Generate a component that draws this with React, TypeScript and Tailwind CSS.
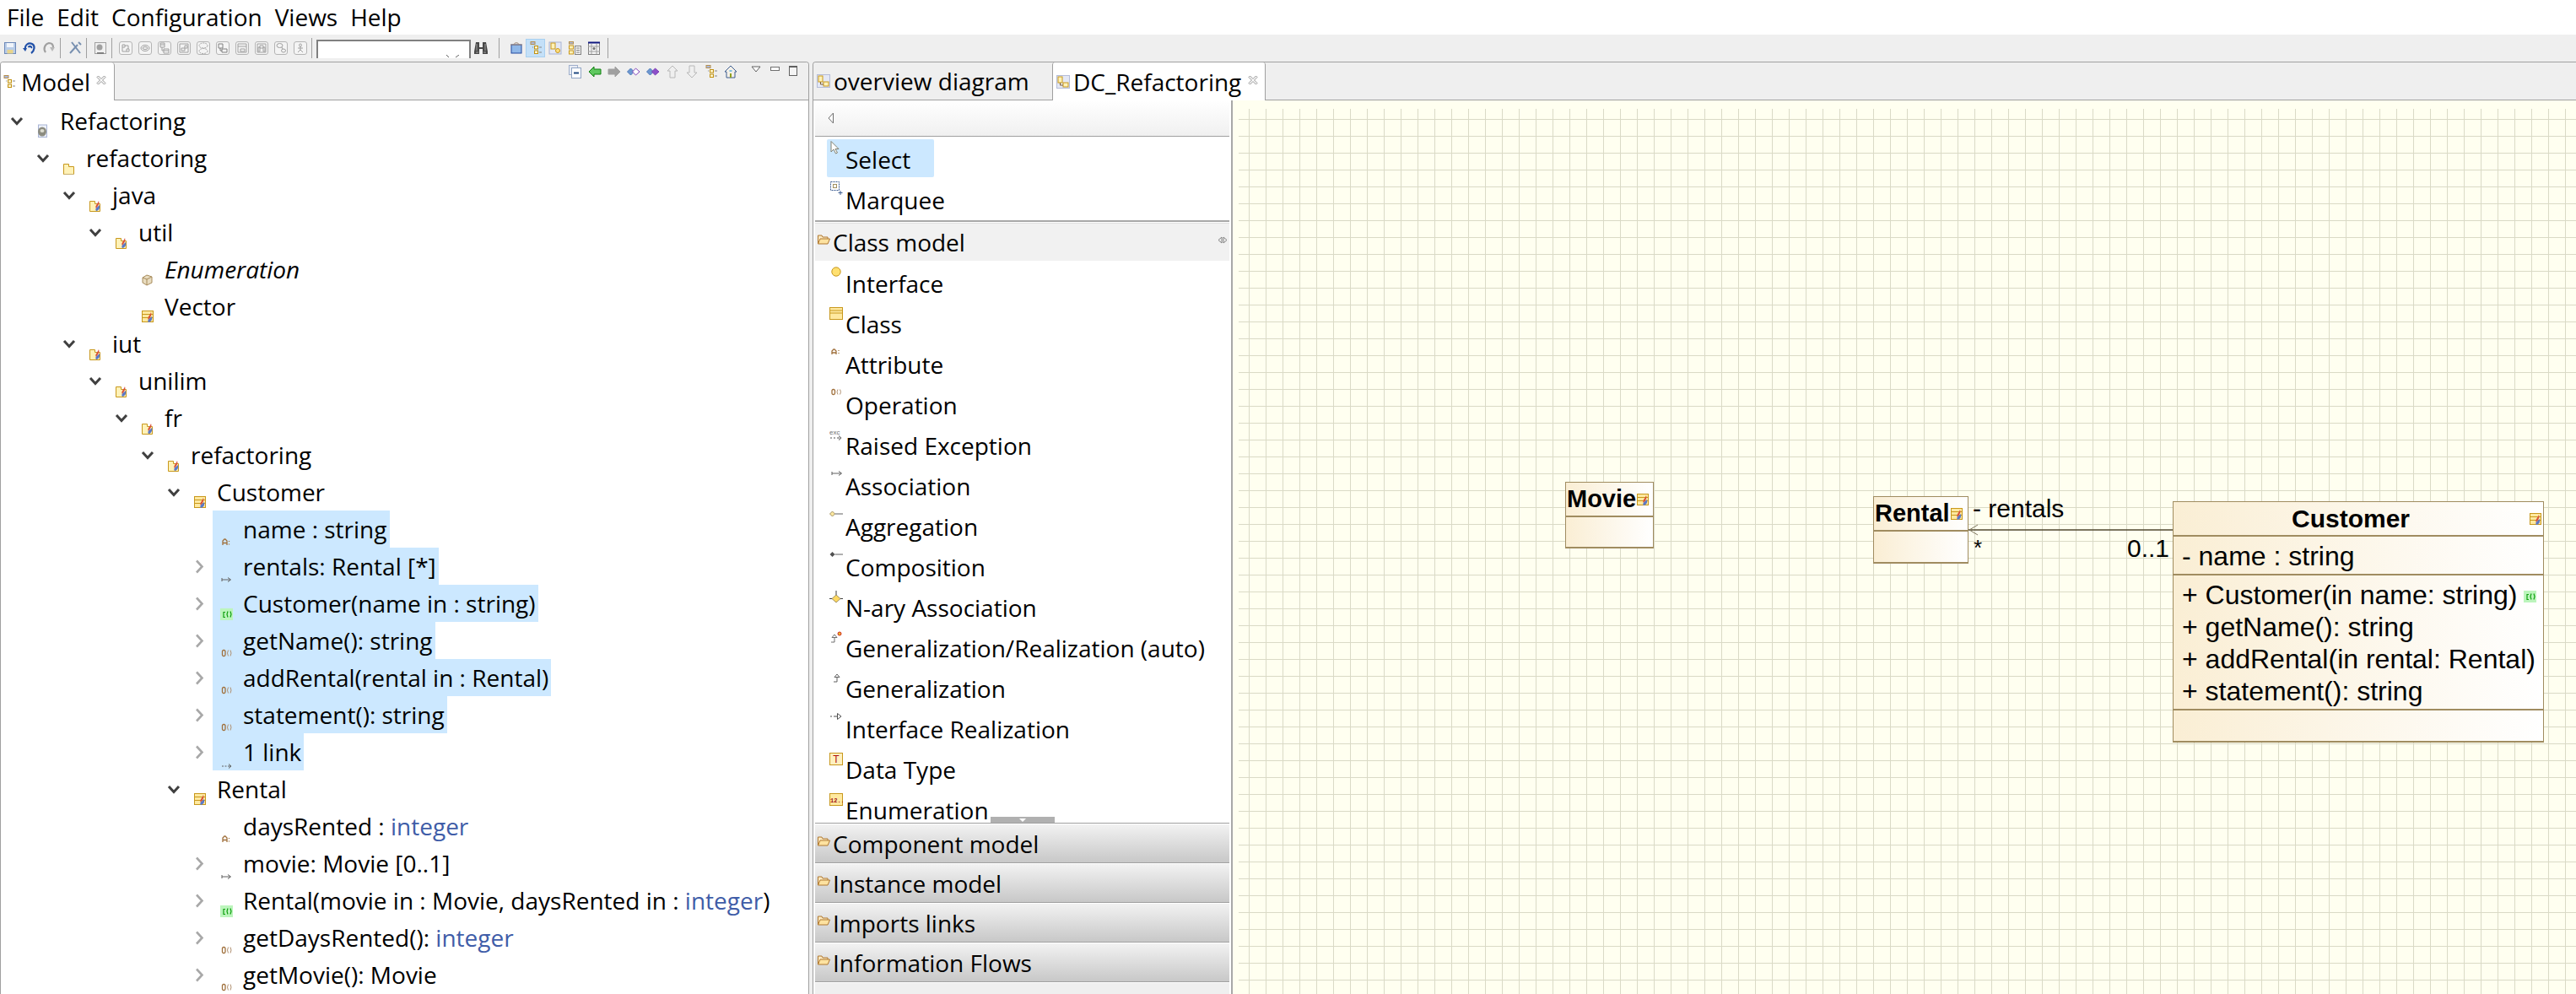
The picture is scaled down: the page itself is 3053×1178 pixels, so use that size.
import type { ReactNode } from "react";

type Kind = "model" | "pkg" | "jpkg" | "iface" | "jclass" | "attr" | "assoc" | "ctor" | "op" | "link" | "none";

function Svg({ children, size = 16 }: { children: ReactNode; size?: number }) {
    return (
        <svg width={size} height={size} viewBox="0 0 16 16" className="block shrink-0">
            {children}
        </svg>
    );
}

const Flame = () => (
    <>
        <path d="M9 12 C7 9 10 8 12 3 C13 6 12 7 11 9 Z" fill="#d8503c" />
        <path d="M9 15 C7 12 10 11 13 8 C14 11 12 15 9 15 Z" fill="#5a78c8" />
    </>
);

function ModelIcon() {
    return (
        <Svg>
            <rect x="2" y="0.5" width="5" height="3" fill="#a8b8e0" stroke="#b8904c" />
            <rect x="6.5" y="5.5" width="4" height="3.5" fill="#fff6d0" stroke="#c09010" />
            <rect x="6.5" y="11" width="4" height="3.5" fill="#fff6d0" stroke="#c09010" />
            <path d="M12 7h3M12 13h3M4 7h1" stroke="#888" fill="none" />
        </Svg>
    );
}

function TreeIcon({ kind }: { kind: Kind }) {
    switch (kind) {
        case "model":
            return (
                <Svg>
                    <rect x="2.5" y="1" width="10" height="14.5" fill="#eef2fa" stroke="#a8b4d4" />
                    <ellipse cx="7" cy="9" rx="5" ry="5.5" fill="#8c8c80" />
                    <ellipse cx="7" cy="8" rx="2.5" ry="2" fill="#dcdcd0" />
                </Svg>
            );
        case "pkg":
            return (
                <Svg>
                    <path d="M1.5 3.5h6v3h6v9h-12z" fill="#fff2b8" stroke="#c8981c" />
                    <path d="M2 16h12" stroke="#c8c8c0" />
                </Svg>
            );
        case "jpkg":
            return (
                <Svg>
                    <path d="M1.5 3.5h6v3h6v9h-12z" fill="#fff2b8" stroke="#c8981c" />
                    <Flame />
                </Svg>
            );
        case "iface":
            return (
                <Svg>
                    <path d="M2 6 L7 3 L13 5 L13 12 L7 15 L2 12 Z" fill="#e8dcc0" stroke="#a88c5c" />
                    <path d="M7 8 V15 M2 6 L7 8 L13 5" fill="none" stroke="#a88c5c" />
                </Svg>
            );
        case "jclass":
            return (
                <Svg>
                    <rect x="1.5" y="1.5" width="13" height="13" fill="#ffe9a0" stroke="#c8981c" />
                    <path d="M2 5.5h12M2 9.5h12" stroke="#c8981c" />
                    <Flame />
                </Svg>
            );
        case "attr":
            return (
                <Svg>
                    <path d="M4 15v-5l2-2h1l2 2v5M4 12.5h5M11.5 10v1M11.5 13.5v1" fill="none" stroke="#a0703c" strokeWidth="1.3" />
                </Svg>
            );
        case "assoc":
            return (
                <Svg>
                    <path d="M3 10v4M3 12h10M10 9.5l3.5 2.5L10 14.5" fill="none" stroke="#606060" />
                </Svg>
            );
        case "ctor":
            return (
                <Svg>
                    <rect x="1" y="2" width="15" height="14" fill="#bcf5bc" />
                    <path d="M7 6.5H5v6h2M10 5.5l-1 3.5 1 3.5M13 5.5l1 3.5-1 3.5" fill="none" stroke="#10a010" strokeWidth="1.2" />
                </Svg>
            );
        case "op":
            return (
                <Svg>
                    <rect x="3.5" y="7.5" width="3.5" height="7" rx="1.5" fill="none" stroke="#a0703c" strokeWidth="1.3" />
                    <path d="M10.5 7.5l-1 3.5 1 3.5M13 7.5l1 3.5-1 3.5" fill="none" stroke="#b09070" />
                </Svg>
            );
        case "link":
            return (
                <Svg>
                    <path d="M3 13h2M6.5 13h2M10 13h3.5M11 10.5l3 2.5-3 2.5" fill="none" stroke="#606060" />
                </Svg>
            );
        default:
            return null;
    }
}

function ChevOpen() {
    return (
        <svg width="16" height="11" viewBox="0 0 16 11" className="block">
            <path d="M2 2 L8 8.5 L14 2" fill="none" stroke="#404040" strokeWidth="3" />
        </svg>
    );
}

function ChevClosed() {
    return (
        <svg width="11" height="17" viewBox="0 0 11 17" className="block">
            <path d="M2 1.5 L8.5 8.5 L2 15.5" fill="none" stroke="#a8a8a8" strokeWidth="2.6" />
        </svg>
    );
}

const Blue = ({ children }: { children: ReactNode }) => <span className="text-[#3f5da8]">{children}</span>;

type Row = { d: number; icon: Kind; label: ReactNode; chev?: "open" | "closed"; sel?: boolean; italic?: boolean };

const rows: Row[] = [
    { d: 0, icon: "model", label: "Refactoring", chev: "open" },
    { d: 1, icon: "pkg", label: "refactoring", chev: "open" },
    { d: 2, icon: "jpkg", label: "java", chev: "open" },
    { d: 3, icon: "jpkg", label: "util", chev: "open" },
    { d: 4, icon: "iface", label: "Enumeration", italic: true },
    { d: 4, icon: "jclass", label: "Vector" },
    { d: 2, icon: "jpkg", label: "iut", chev: "open" },
    { d: 3, icon: "jpkg", label: "unilim", chev: "open" },
    { d: 4, icon: "jpkg", label: "fr", chev: "open" },
    { d: 5, icon: "jpkg", label: "refactoring", chev: "open" },
    { d: 6, icon: "jclass", label: "Customer", chev: "open" },
    { d: 7, icon: "attr", label: "name : string", sel: true },
    { d: 7, icon: "assoc", label: "rentals: Rental [*]", chev: "closed", sel: true },
    { d: 7, icon: "ctor", label: "Customer(name in : string)", chev: "closed", sel: true },
    { d: 7, icon: "op", label: "getName(): string", chev: "closed", sel: true },
    { d: 7, icon: "op", label: "addRental(rental in : Rental)", chev: "closed", sel: true },
    { d: 7, icon: "op", label: "statement(): string", chev: "closed", sel: true },
    { d: 7, icon: "link", label: "1 link", chev: "closed", sel: true },
    { d: 6, icon: "jclass", label: "Rental", chev: "open" },
    { d: 7, icon: "attr", label: <>daysRented : <Blue>integer</Blue></> },
    { d: 7, icon: "assoc", label: "movie: Movie [0..1]", chev: "closed" },
    { d: 7, icon: "ctor", label: <>Rental(movie in : Movie, daysRented in : <Blue>integer</Blue>)</>, chev: "closed" },
    { d: 7, icon: "op", label: <>getDaysRented(): <Blue>integer</Blue></>, chev: "closed" },
    { d: 7, icon: "op", label: "getMovie(): Movie", chev: "closed" },
];

function TreeRow({ row }: { row: Row }) {
    return (
        <div className="flex h-[44px] shrink-0" style={{ marginLeft: row.d * 31 + 3 }}>
            <div className="flex w-[31px] items-center justify-center">
                {row.chev === "open" && <ChevOpen />}
                {row.chev === "closed" && <ChevClosed />}
            </div>
            <div className={`flex h-full pr-[3px] ${row.sel ? "bg-[#cce8ff]" : ""}`}>
                <div className="ml-[8px] mr-[12px] mb-[2px] self-end">
                    <TreeIcon kind={row.icon} />
                </div>
                <span className={`pt-[1px] leading-[42px] whitespace-nowrap ${row.italic ? "italic" : ""}`}>{row.label}</span>
            </div>
        </div>
    );
}

function CloseX() {
    return (
        <svg width="12" height="12" viewBox="0 0 12 12" className="block">
            <path d="M1 2.5 L2.5 1 L6 4.5 L9.5 1 L11 2.5 L7.5 6 L11 9.5 L9.5 11 L6 7.5 L2.5 11 L1 9.5 L4.5 6 Z" fill="none" stroke="#909090" />
        </svg>
    );
}

function DiagramIcon() {
    return (
        <Svg>
            <rect x="0.5" y="0.5" width="15" height="15" fill="#e4e8f4" stroke="#b4bcd8" />
            <rect x="2" y="2" width="5" height="7" fill="#fff2b8" stroke="#c8981c" />
            <rect x="8" y="9" width="6" height="5" fill="#fff2b8" stroke="#c8981c" />
            <path d="M4.5 9v3H8" fill="none" stroke="#806030" />
        </Svg>
    );
}

const gray = "#a0a0a0";

const ToolGlyphs: ReactNode[] = [
    <path key="a" d="M4 4h3v3H4zM9 9h3v3H9zM7 5h4v4M4 7v5h5" fill="none" stroke={gray} />,
    <g key="b" fill="none" stroke={gray}><ellipse cx="8" cy="8" rx="5" ry="3.5" /><ellipse cx="8" cy="8" rx="3" ry="1.5" /></g>,
    <path key="c" d="M3 2h5v5H3zM7 9h6v5H7zM5 7v4h2M3 4h5M7 11h6" fill="none" stroke={gray} />,
    <path key="d" d="M3 3h10v10H3zM5 8h4v3H5zM9 5h3v3H9z" fill="none" stroke={gray} />,
    <g key="e" fill="none" stroke={gray} strokeDasharray="2 1"><ellipse cx="8" cy="5" rx="5" ry="3" /><ellipse cx="8" cy="11.5" rx="5" ry="3" /></g>,
    <path key="f" d="M3 3h5v5H3zM7 9h6v4H7zM5 8v3h2" fill="none" stroke="#808080" />,
    <path key="g" d="M3 3h10v10H3zM3 6h10M6 9h5v3H6z" fill="none" stroke={gray} />,
    <path key="h" d="M3 3h10v10H3zM4 7h2v5H4zM10 7h2v5h-2zM6 5h4v3H6z" fill="none" stroke={gray} />,
    <g key="i" fill="none" stroke={gray}><ellipse cx="6.5" cy="5" rx="3.5" ry="2.5" /><ellipse cx="11" cy="11" rx="2.5" ry="2" /><path d="M9 7l1 2" /></g>,
    <g key="j" fill="none" stroke={gray}><circle cx="8" cy="4.5" r="1.5" /><path d="M8 6v4M5 8h6M8 10l-3 3M8 10l3 3" /></g>,
];

function ToolBtn({ children, active }: { children: ReactNode; active?: boolean }) {
    return (
        <div className={`flex h-[22px] w-[23px] items-center justify-center ${active ? "border border-[#a8d0f0] bg-[#c4e0f8]" : ""}`}>
            {children}
        </div>
    );
}

const Sep = () => <div className="mx-[1.5px] h-[24px] w-[1px] bg-[#a0a0a0]" />;

function Toolbar() {
    return (
        <div className="flex h-[32px] shrink-0 items-center bg-[#efefef]">
            <ToolBtn>
                <Svg>
                    <rect x="1.5" y="1.5" width="13" height="13" fill="#b8cce8" stroke="#6c88b8" />
                    <rect x="4" y="2" width="8" height="5" fill="#f0f4fa" />
                    <rect x="4.5" y="10" width="7" height="4.5" fill="#e8d48c" />
                </Svg>
            </ToolBtn>
            <ToolBtn>
                <Svg>
                    <path d="M3 10 C2 4 7 1 11 3 C15 5 14 11 10 14 M10 8 C11 6 8 5 6.5 7" fill="none" stroke="#2050a8" strokeWidth="2.2" />
                    <path d="M0 8l5 0-2 4z" fill="#2050a8" />
                </Svg>
            </ToolBtn>
            <ToolBtn>
                <Svg>
                    <path d="M4 13 C1 9 3 3 8 2 C11 2 13 4 13 7" fill="none" stroke="#a0a0a0" strokeWidth="2.2" />
                    <path d="M9 7l6 0-3 5z" fill="#b8b8b8" />
                </Svg>
            </ToolBtn>
            <Sep />
            <div className="ml-[4px]">
                <ToolBtn>
                    <Svg>
                        <path d="M2 14 L11 4 M12 1 L15 4 M4 1 L14 14" fill="none" stroke="#7890b0" strokeWidth="2" />
                    </Svg>
                </ToolBtn>
            </div>
            <Sep />
            <div className="ml-[3px]">
                <ToolBtn>
                    <Svg>
                        <rect x="1.5" y="1.5" width="13" height="13" fill="#f0f0f0" stroke={gray} />
                        <circle cx="7" cy="7" r="3.5" fill="#a0a0a0" />
                        <path d="M4 14h8" stroke="#808080" strokeWidth="2" />
                    </Svg>
                </ToolBtn>
            </div>
            <Sep />
            <div className="ml-[3px] flex">
                {ToolGlyphs.map((g, i) => (
                    <ToolBtn key={i}>
                        <Svg>
                            <rect x="0.5" y="0.5" width="15" height="15" rx="2.5" fill="#f4f4f4" stroke="#b4b4b4" />
                            {g}
                        </Svg>
                    </ToolBtn>
                ))}
            </div>
            <Sep />
            <div className="relative ml-[4px] mt-[6px] h-[22px] w-[183px] self-start border-x-2 border-t-2 border-[#808080] bg-white">
                <svg width="18" height="4" viewBox="0 0 18 4" className="absolute bottom-0 right-[10px]">
                    <path d="M1 0l3 3M12 3l4-3" fill="none" stroke="#606060" />
                </svg>
            </div>
            <ToolBtn>
                <Svg>
                    <path d="M2 1h4v6h4V1h4l2 11v3h-6V9H6v6H0v-3z" fill="#484848" />
                    <path d="M3 3v8M13 3v8M2 13h3M11 13h3" stroke="#a0a0a0" />
                </Svg>
            </ToolBtn>
            <div className="ml-[8px]"><Sep /></div>
            <div className="ml-[7px] flex">
                <ToolBtn>
                    <Svg>
                        <rect x="2" y="4" width="12" height="10" fill="#90b8e8" stroke="#2048a0" />
                        <path d="M1 4h14M5 4c0-3 6-3 6 0" fill="none" stroke="#a08878" />
                    </Svg>
                </ToolBtn>
                <ToolBtn active>
                    <ModelIcon />
                </ToolBtn>
                <ToolBtn>
                    <Svg>
                        <rect x="1" y="1" width="14" height="14" fill="#e4e8f4" stroke="#a8b4d4" />
                        <rect x="3" y="2" width="5" height="7" fill="#fff2b8" stroke="#c8981c" />
                        <circle cx="11" cy="11" r="2.5" fill="#ffe080" stroke="#c8981c" />
                    </Svg>
                </ToolBtn>
                <ToolBtn>
                    <Svg>
                        <rect x="1.5" y="0.5" width="5" height="2.5" fill="#a8b8e0" stroke="#b8904c" />
                        <rect x="1.5" y="5" width="5" height="4" fill="#fff2b8" stroke="#c8981c" />
                        <rect x="1.5" y="11" width="5" height="4" fill="#fff2b8" stroke="#c8981c" />
                        <rect x="8.5" y="5.5" width="7" height="10" fill="#f4f4f4" stroke="#808080" />
                        <path d="M10 8h4M10 10.5h4M10 13h4" stroke="#808080" />
                    </Svg>
                </ToolBtn>
                <ToolBtn>
                    <Svg>
                        <rect x="1.5" y="1.5" width="13" height="14" fill="#f4f4f4" stroke="#808080" />
                        <rect x="1" y="0.5" width="14" height="2" fill="#101880" />
                        <path d="M1 6h14M1 12h14M5 3v12M11 3v12" stroke="#a0a0a0" />
                        <circle cx="8" cy="8.5" r="1.5" fill="#707070" />
                    </Svg>
                </ToolBtn>
            </div>
            <div className="ml-[3px]"><Sep /></div>
        </div>
    );
}

function ViewTools() {
    const arrow = (d: string, fill: string, stroke: string) => (
        <Svg>
            <path d={d} fill={fill} stroke={stroke} />
        </Svg>
    );
    const diamonds = (fill: string) => (
        <Svg>
            <path d="M4.5 4 L8.5 8 L4.5 12 L0.5 8 Z" fill="#6c98d0" stroke="#4c78b8" />
            <path d="M10.5 4 L15 8 L10.5 12 L6.5 8 Z" fill={fill} stroke="#8040b8" />
        </Svg>
    );
    return (
        <div className="ml-auto mr-[13px] mt-[3px] flex h-[16px] items-center">
            <div className="flex gap-[7px]">
                <Svg>
                    <rect x="0.5" y="0.5" width="10" height="11" fill="#e8ecf4" stroke="#a0b0cc" />
                    <rect x="3.5" y="3.5" width="11" height="12" fill="#fff" stroke="#90a4c4" />
                    <path d="M6 9.5h6" stroke="#204880" strokeWidth="2" />
                </Svg>
                {arrow("M1 8 L7 2 V5 H15 V11 H7 V14 Z", "#60c860", "#108010")}
                {arrow("M15 8 L9 2 V5 H1 V11 H9 V14 Z", "#a0a0a0", "#a0a0a0")}
                {diamonds("#ffffff")}
                {diamonds("#8c50c8")}
                {arrow("M8 1 L14 7 H11 V15 H5 V7 H2 Z", "none", "#b8b8b8")}
                {arrow("M8 15 L14 9 H11 V1 H5 V9 H2 Z", "none", "#b8b8b8")}
                <ModelIcon />
                <Svg>
                    <path d="M8 1 L15 8 H13 V15 H3 V8 H1 Z" fill="#f4f0e8" stroke="#3c5c90" />
                    <rect x="7" y="10" width="2" height="5" fill="#90a020" />
                    <rect x="6.5" y="6" width="3" height="2" fill="#80c0e0" />
                </Svg>
            </div>
            <svg width="14" height="9" viewBox="0 0 14 9" className="ml-[16px] -mt-[6px]">
                <path d="M1 1h10L6 7z" fill="#fff" stroke="#606060" />
            </svg>
            <div className="ml-[9px] -mt-[7px] h-[5px] w-[11px] border border-[#707070] bg-white" />
            <div className="ml-[11px] -mt-[2px] h-[12px] w-[10px] border border-[#606060] border-t-2 bg-[#f4f4f4]" />
        </div>
    );
}

function PaletteIcon({ name }: { name: string }) {
    switch (name) {
        case "Select":
            return <Svg><path d="M2 0.5 V13 L5 10 L7.5 15 L9.5 14 L7 9.5 H11 Z" fill="#fff" stroke="#808070" /></Svg>;
        case "Marquee":
            return <Svg><rect x="1.5" y="0.5" width="10" height="10" fill="none" stroke="#3c5c90" strokeDasharray="2 1" /><rect x="4.5" y="3.5" width="4" height="4" fill="none" stroke="#a09060" /><path d="M13 11v5M10.5 13.5h5" stroke="#3c5c90" /></Svg>;
        case "Interface":
            return <Svg><circle cx="8" cy="6" r="5.2" fill="#ffe070" stroke="#c89820" /></Svg>;
        case "Class":
            return <Svg><rect x="0.5" y="0.5" width="15" height="14" fill="#ffe9a0" stroke="#c8981c" /><path d="M1 4h14M1 7h14" stroke="#c8981c" /></Svg>;
        case "Attribute":
            return <Svg><path d="M3 8V4l2-2h1l2 2v4M3 6h5M11 3v1M11 6v1" fill="none" stroke="#a0703c" strokeWidth="1.3" /></Svg>;
        case "Operation":
            return <Svg><rect x="3" y="1.5" width="3.5" height="6" rx="1.5" fill="none" stroke="#a0703c" strokeWidth="1.3" /><path d="M10 1.5l-1 3 1 3M12.5 1.5l1 3-1 3" fill="none" stroke="#b09070" /></Svg>;
        case "Raised Exception":
            return <Svg><text x="0" y="6.5" fontSize="8" fill="#707070" fontFamily="Liberation Sans, sans-serif">exc</text><path d="M1 11h2M5 11h2M9 11h3M11 8.5l3 2.5-3 2.5" fill="none" stroke="#505050" /></Svg>;
        case "Association":
            return <Svg><path d="M3 3v4M3 5h11M11 2.5l3.5 2.5L11 7.5" fill="none" stroke="#606060" /></Svg>;
        case "Aggregation":
            return <Svg><path d="M3.5 2 L6.5 5 L3.5 8 L0.5 5 Z" fill="#ffe9a0" stroke="#a09060" /><path d="M6.5 5H16" stroke="#606060" /></Svg>;
        case "Composition":
            return <Svg><path d="M3.5 2 L6.5 5 L3.5 8 L0.5 5 Z" fill="#505050" /><path d="M6.5 5H16" stroke="#606060" /></Svg>;
        case "N-ary Association":
            return <Svg><path d="M8 5 L13 9.5 L8 14 L3 9.5 Z" fill="#ffd860" stroke="#a09060" /><path d="M8 0v5M0 9.5h3M13 9.5h3" stroke="#404040" /></Svg>;
        case "Generalization/Realization (auto)":
            return <Svg><path d="M2 13h4V7M3 7.5L6 4l3 3.5z" fill="#fff" stroke="#707070" /><circle cx="12" cy="3" r="2" fill="#e8c020" stroke="#d02020" /></Svg>;
        case "Generalization":
            return <Svg><path d="M5 12h4V6M6 6.5L9 3l3 3.5z" fill="#fff" stroke="#606060" /></Svg>;
        case "Interface Realization":
            return <Svg><path d="M1 5h2M5 5h4" stroke="#505050" /><path d="M9.5 1.5L14 5l-4.5 3.5z" fill="#fff" stroke="#505050" /></Svg>;
        case "Data Type":
            return <Svg><rect x="0.5" y="0.5" width="15" height="14" fill="#fff0c0" stroke="#c8981c" /><text x="8" y="12" textAnchor="middle" fontSize="12" fill="#b01010" fontFamily="Liberation Sans, sans-serif">T</text></Svg>;
        case "Enumeration":
            return <Svg><rect x="0.5" y="0.5" width="15" height="14" fill="#ffe9a0" stroke="#c8981c" /><text x="1" y="11" fontSize="7" fontWeight="bold" fill="#a01010" fontFamily="Liberation Mono, monospace">12..</text></Svg>;
        default:
            return null;
    }
}

function FolderIcon() {
    return (
        <svg width="15" height="12" viewBox="0 0 15 12" className="block shrink-0">
            <path d="M0.5 11 V1 H5 L6 3 H12 V5" fill="#fbe9c0" stroke="#b07830" />
            <path d="M0.5 11 L3 5 H14.5 L12 11 Z" fill="#fde2a0" stroke="#b07830" />
        </svg>
    );
}

function ToolRow({ name, active, top }: { name: string; active?: boolean; top?: boolean }) {
    return (
        <div className={`relative flex shrink-0 items-start pl-[22px] ${top ? "leading-[48px]" : "leading-[45px]"} ${active ? "h-[45px] w-[127px] rounded-[2px] bg-[#cce8ff]" : "h-[48px]"}`}>
            <div className="absolute left-[3px] top-[2px]">
                <PaletteIcon name={name} />
            </div>
            <span className="whitespace-nowrap">{name}</span>
        </div>
    );
}

function Drawer({ title }: { title: string }) {
    return (
        <div className="flex h-[47px] shrink-0 items-start border-t border-[#a0a0a0] pt-[1px]">
            <div className="flex h-[45px] w-full items-center bg-linear-to-b from-[#f2f2f2] to-[#c8c8c8] pl-[3px] leading-[45px]">
                <div className="-mt-[6px]"><FolderIcon /></div>
                <span className="ml-[3px] whitespace-nowrap pt-[2px]">{title}</span>
            </div>
        </div>
    );
}

const classTools = [
    "Interface", "Class", "Attribute", "Operation", "Raised Exception", "Association", "Aggregation", "Composition",
    "N-ary Association", "Generalization/Realization (auto)", "Generalization", "Interface Realization", "Data Type", "Enumeration",
];

function Palette() {
    return (
        <div className="flex w-[497px] shrink-0 flex-col border-r-2 border-[#a8a8a8] bg-white px-[2px]">
            <div className="flex h-[43px] shrink-0 items-center border-b border-[#a0a0a0] bg-linear-to-b from-white to-[#f0f0f0] pl-[15px]">
                <svg width="8" height="14" viewBox="0 0 8 14" className="block">
                    <path d="M6.5 1 L1 7 L6.5 13 Z" fill="#fff" stroke="#707070" />
                </svg>
            </div>
            <div className="ml-[14px] mt-[3px] flex flex-col">
                <ToolRow name="Select" active top />
                <div className="h-[3px]" />
                <ToolRow name="Marquee" top />
            </div>
            <div className="h-[2px] shrink-0 bg-[#a8a8a8]" />
            <div className="mt-[1px] flex h-[45px] shrink-0 items-center border-t border-[#e0e0e0] bg-[#f1f1f1] pl-[3px] leading-[44px]">
                <div className="-mt-[6px]"><FolderIcon /></div>
                <span className="ml-[3px]">Class model</span>
                <svg width="12" height="9" viewBox="0 0 12 9" className="ml-auto mr-[2px] -mt-[6px] block">
                    <path d="M1 4.5 L5 1 V8 Z M11 4.5 L7 1 V8 Z" fill="none" stroke="#808080" />
                </svg>
            </div>
            <div className="relative flex h-[666px] shrink-0 flex-col overflow-hidden pl-[14px] pt-[5px]">
                {classTools.map((t) => (
                    <ToolRow key={t} name={t} />
                ))}
                <div className="absolute bottom-0 left-[208px] flex h-[7px] w-[76px] items-center justify-center bg-[#b0b0b0]">
                    <svg width="8" height="4" viewBox="0 0 8 4" className="block"><path d="M0 0h8L4 4z" fill="#fff" /></svg>
                </div>
            </div>
            <Drawer title="Component model" />
            <Drawer title="Instance model" />
            <Drawer title="Imports links" />
            <Drawer title="Information Flows" />
            <div className="h-[15px] shrink-0 border-t border-[#a0a0a0] pt-[1px]">
                <div className="h-full bg-[#efefef]" />
            </div>
        </div>
    );
}

function UmlNode({ title, className, titleClass, icon = "jclass" }: { title: string; className: string; titleClass: string; icon?: Kind }) {
    return (
        <div className={`absolute flex flex-col border border-[#a08c60] border-b-2 bg-linear-to-r from-[#faeed4] to-white ${className}`}>
            <div className={`flex h-[41px] shrink-0 items-center border-b-2 border-[#a08c60] font-bold ${titleClass}`}>
                <span>{title}</span>
                <TreeIcon kind={icon} />
            </div>
        </div>
    );
}

function CustomerNode() {
    const ops = ["+ Customer(in name: string)", "+ getName(): string", "+ addRental(in rental: Rental)", "+ statement(): string"];
    return (
        <div className="absolute left-[1114px] top-[475px] flex h-[286px] w-[440px] flex-col border border-[#a08c60] border-b-2 bg-linear-to-r from-[#faeed4] to-white">
            <div className="relative flex h-[41px] shrink-0 items-center justify-center border-b-2 border-[#a08c60] pb-[1px] pr-[18px] text-[30px] font-bold">
                Customer
                <div className="absolute right-[1px] top-[12px]">
                    <TreeIcon kind="jclass" />
                </div>
            </div>
            <div className="flex h-[46px] shrink-0 items-center border-b-2 border-[#a08c60] pl-[10px] pt-[1px]">- name : string</div>
            <div className="relative flex h-[160px] shrink-0 flex-col border-b-2 border-[#a08c60] pl-[10px] pt-[4px]">
                {ops.map((o) => (
                    <div key={o} className="h-[38px] whitespace-nowrap leading-[38px]">{o}</div>
                ))}
                <div className="absolute right-[8px] top-[16px]">
                    <TreeIcon kind="ctor" />
                </div>
            </div>
        </div>
    );
}

function Canvas() {
    return (
        <div className="relative min-w-0 flex-1 overflow-hidden bg-[#fffff0] font-['Liberation_Sans',Arial,sans-serif] text-[32px] text-black">
            <div className="ml-[7px] mt-[10px] h-[1049px] bg-[linear-gradient(to_right,#dadac6_1px,transparent_1px),linear-gradient(to_bottom,#dadac6_1px,transparent_1px)] bg-size-[20px_20px] bg-position-[12px_12px]" />
            <UmlNode title="Movie" className="left-[394px] top-[452px] h-[79px] w-[105px] text-[29px]" titleClass="pl-[1px]" />
            <UmlNode title="Rental" className="left-[759px] top-[469px] h-[80px] w-[113px] text-[29px]" titleClass="pl-[1px]" />
            <svg width="245" height="16" viewBox="0 0 245 16" className="absolute left-[871px] top-[501px]">
                <path d="M1 8 H244" stroke="#504830" strokeWidth="1.5" fill="none" />
                <path d="M12 2 L2 8 L12 14" stroke="#807860" fill="none" />
            </svg>
            <span className="absolute left-[877px] top-[466px] text-[30px] leading-[36px]">- rentals</span>
            <span className="absolute left-[878px] top-[512px] text-[26px] leading-[36px]">*</span>
            <span className="absolute left-[1060px] top-[513px] text-[30px] leading-[36px]">0..1</span>
            <CustomerNode />
        </div>
    );
}

export default function App() {
    return (
        <div className="flex h-[1178px] w-[3053px] flex-col overflow-hidden bg-white font-['Open_Sans','Noto_Sans',sans-serif] text-[28px] text-black">
            <div className="flex h-[41px] shrink-0 items-center gap-[15px] pb-[2px] pl-[8px] leading-[38px]">
                <span>File</span>
                <span>Edit</span>
                <span>Configuration</span>
                <span>Views</span>
                <span>Help</span>
            </div>
            <Toolbar />
            <div className="flex min-h-0 flex-1 bg-[#efefef]">
                <div className="flex w-[959px] shrink-0 flex-col overflow-hidden rounded-t-[4px] border-x border-t border-[#a0a0a0] bg-white">
                    <div className="flex h-[45px] shrink-0 items-start border-b border-[#a0a0a0] bg-[#efefef]">
                        <div className="-mb-[1px] flex h-[45px] w-[135px] items-center rounded-tr-[4px] border-r border-[#a0a0a0] bg-white pl-[2px]">
                            <ModelIcon />
                            <span className="ml-[6px] leading-[44px]">Model</span>
                            <div className="ml-[7px] -mt-[4px]"><CloseX /></div>
                        </div>
                        <ViewTools />
                    </div>
                    <div className="flex min-h-0 flex-1 flex-col pt-[2px]">
                        {rows.map((r, i) => (
                            <TreeRow key={i} row={r} />
                        ))}
                    </div>
                </div>
                <div className="ml-[4px] flex min-w-0 flex-1 flex-col overflow-hidden rounded-tl-[4px] border-l border-t border-[#a0a0a0]">
                    <div className="flex h-[45px] shrink-0 items-start border-b border-[#a0a0a0] bg-[#efefef]">
                        <div className="flex h-[44px] w-[283px] items-center gap-[4px] pl-[4px]">
                            <DiagramIcon />
                            <span className="leading-[44px]">overview diagram</span>
                        </div>
                        <div className="z-10 flex h-[45px] w-[253px] items-center rounded-t-[3px] border-x border-t-0 border-[#a0a0a0] bg-white pl-[4px]">
                            <DiagramIcon />
                            <span className="ml-[4px] leading-[44px]">DC_Refactoring</span>
                            <div className="ml-[8px] -mt-[4px]"><CloseX /></div>
                        </div>
                    </div>
                    <div className="flex min-h-0 flex-1">
                        <Palette />
                        <Canvas />
                    </div>
                </div>
            </div>
        </div>
    );
}
